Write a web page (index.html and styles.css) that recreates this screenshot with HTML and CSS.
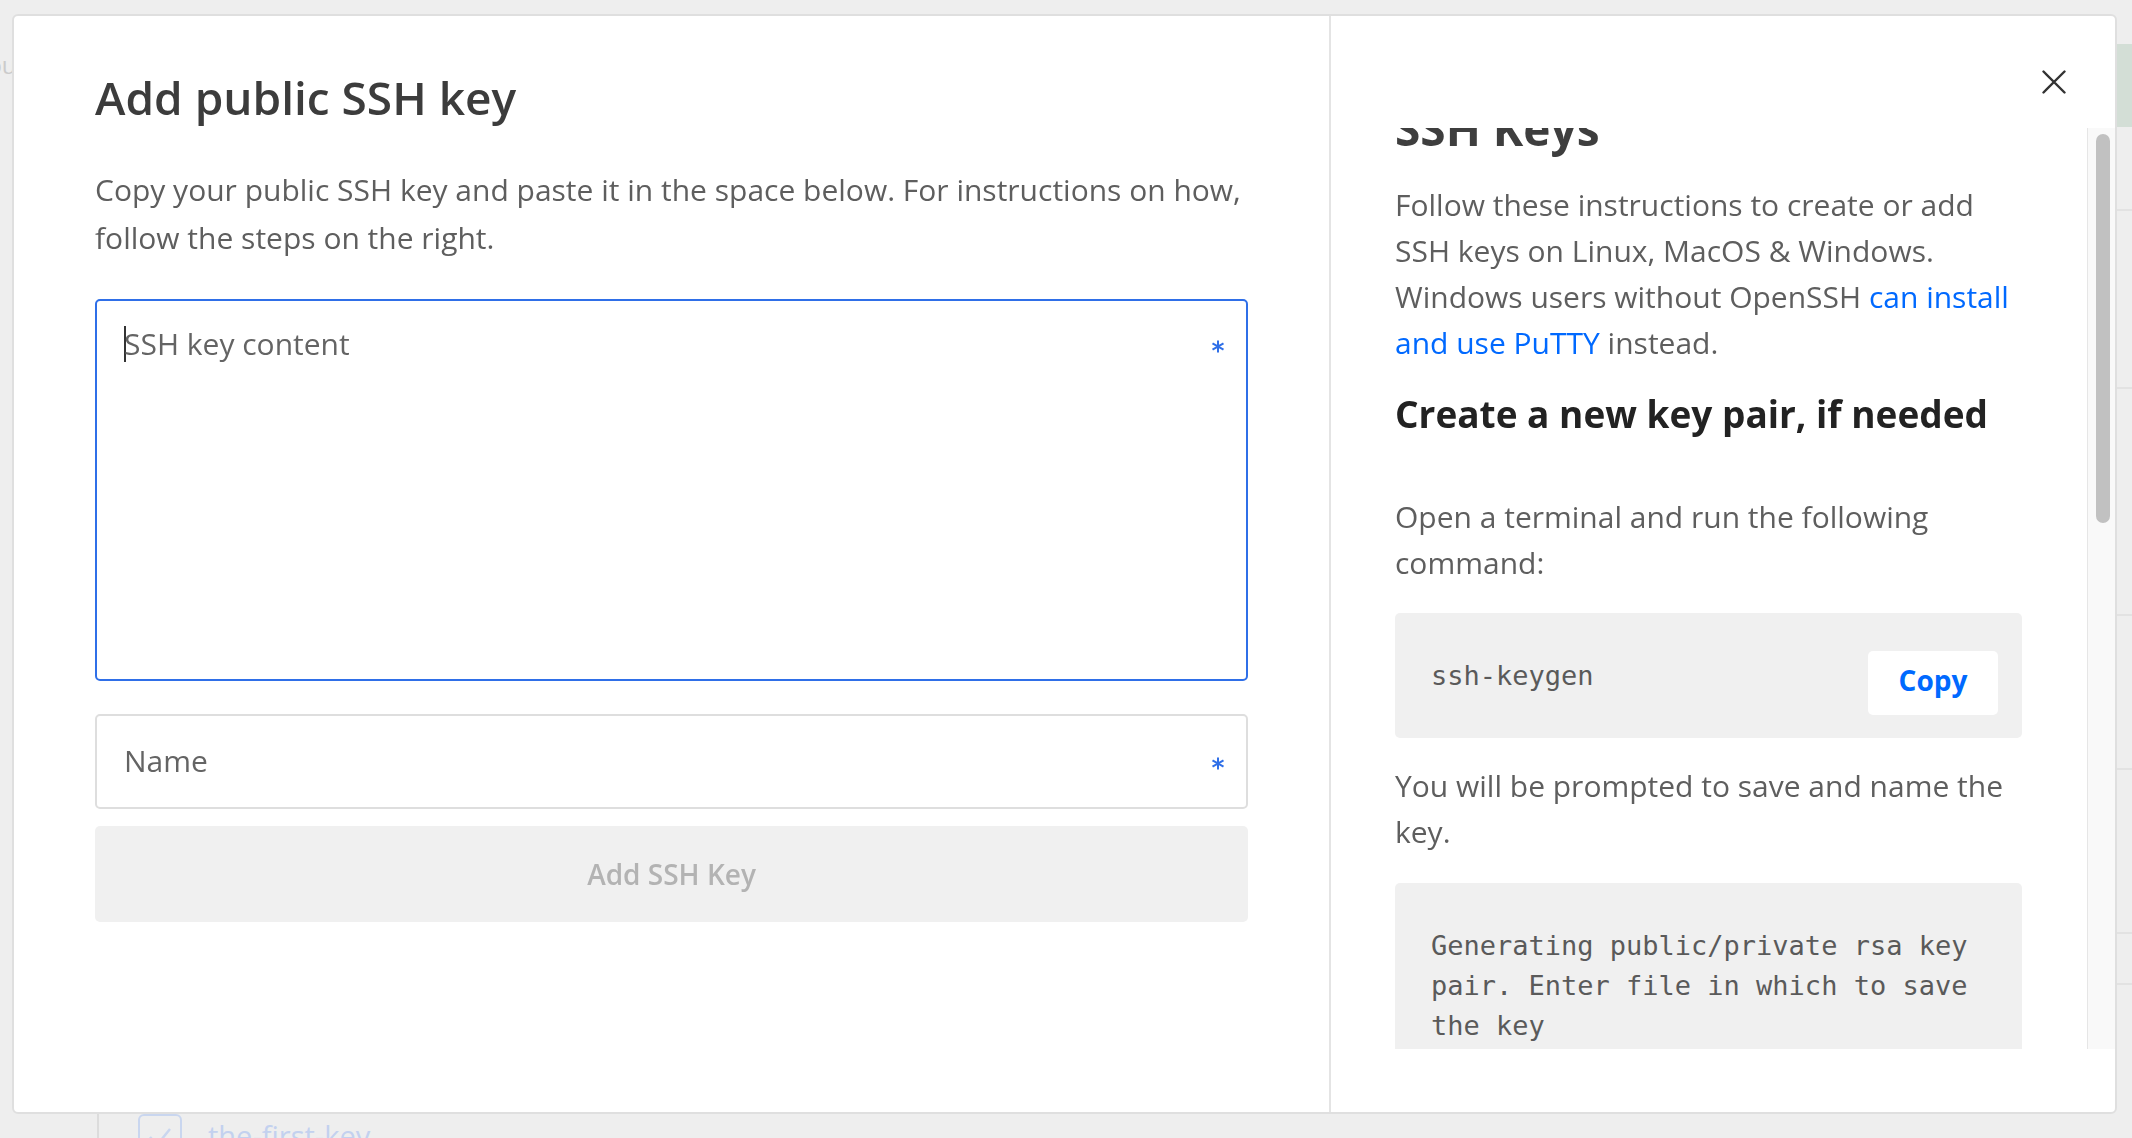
FILE: index.html
```html
<!DOCTYPE html>
<html lang="en">
<head>
<meta charset="utf-8">
<title>Add public SSH key</title>
<link rel="stylesheet" href="styles.css">
</head>
<body>
<div class="backdrop">
  <div class="bg-left"><span class="bg-ghost">You</span></div>
  <div class="bg-main">
    <div class="bg-list">
      <div class="bg-row">
        <span class="bg-check"><svg viewBox="0 0 44 44" width="44" height="44"><path d="M12 23 L19 31 L32 15" fill="none" stroke="#c9d6ef" stroke-width="2.5"/></svg></span>
        <span class="bg-keyname">the-first-key</span>
      </div>
    </div>
  </div>
  <div class="bg-right">
    <div class="bg-green"></div>
    <div class="bg-line h84"></div>
    <div class="bg-line h178"></div>
    <div class="bg-line h227"></div>
    <div class="bg-line h154"></div>
    <div class="bg-line h164"></div>
    <div class="bg-line h51"></div>
  </div>
</div>

<div class="modal" role="dialog" aria-label="Add public SSH key">
  <section class="pane-left">
    <h1 class="title">Add public SSH key</h1>
    <p class="lead">Copy your public SSH key and paste it in the space below. For instructions on how, follow the steps on the right.</p>
    <div class="field field-area">
      <span class="caret"></span><span class="ph">SSH key content</span>
      <svg class="req req-area" viewBox="0 0 14 13" width="14" height="13" aria-label="required"><path d="M7 0.5 V12.5 M1.5 3.3 L12.5 9.7 M1.5 9.7 L12.5 3.3" stroke="#2f6fe8" stroke-width="2" fill="none"/></svg>
    </div>
    <div class="field field-input">
      <span class="ph">Name</span>
      <svg class="req req-input" viewBox="0 0 14 13" width="14" height="13" aria-label="required"><path d="M7 0.5 V12.5 M1.5 3.3 L12.5 9.7 M1.5 9.7 L12.5 3.3" stroke="#2f6fe8" stroke-width="2" fill="none"/></svg>
    </div>
    <div class="btn-add">Add SSH Key</div>
  </section>

  <section class="pane-right">
    <button class="close" aria-label="Close"><svg viewBox="0 0 24 24" width="24" height="24"><path d="M1.5 1.5 L22.5 22.5 M22.5 1.5 L1.5 22.5" stroke="#333" stroke-width="2.4" stroke-linecap="round" fill="none"/></svg></button>
    <div class="scroll">
      <div class="scroll-content">
        <h2 class="doc-h1">SSH Keys</h2>
        <p class="doc-p">Follow these instructions to create or add SSH keys on Linux, MacOS &amp; Windows. Windows users without OpenSSH <a class="link" href="#">can install and use PuTTY</a> instead.</p>
        <h3 class="doc-h2">Create a new key pair, if needed</h3>
        <p class="doc-p p-open">Open a terminal and run the following command:</p>
        <div class="code code-1">
          <pre class="code-text">ssh-keygen</pre>
          <span class="copy">Copy</span>
        </div>
        <p class="doc-p p-prompt">You will be prompted to save and name the key.</p>
        <div class="code code-2">
          <pre class="code-text">Generating public/private rsa key pair. Enter file in which to save the key</pre>
        </div>
      </div>
      <div class="track"><div class="thumb"></div></div>
    </div>
  </section>
</div>
</body>
</html>
```

FILE: styles.css
```css
* { box-sizing: border-box; }

html, body {
  margin: 0;
  padding: 0;
  width: 2132px;
  height: 1138px;
  overflow: hidden;
  background: #eeeeee;
  font-family: "Open Sans", "Lato", "Liberation Sans", sans-serif;
}

/* ---------- page behind the modal ---------- */
.backdrop {
  display: grid;
  grid-template-columns: 97px 1fr 15px;
  height: 1138px;
}

.bg-left {
  padding-top: 48px;
  overflow: hidden;
}

.bg-ghost {
  display: block;
  margin-left: -26px;
  font-size: 24px;
  color: #cbcbcb;
}

.bg-main {
  padding-top: 1000px;
  overflow: hidden;
}

.bg-list {
  border-left: 2px solid #dcdcdc;
  padding-top: 114px;
  padding-left: 39px;
  height: 300px;
}

.bg-row {
  display: flex;
  align-items: flex-start;
  gap: 26px;
}

.bg-check {
  display: block;
  width: 44px;
  height: 44px;
  border: 2px solid #c9d6ef;
  border-radius: 6px;
  flex: none;
}

.bg-check svg { display: block; margin: -2px; }

.bg-keyname {
  font-size: 29px;
  line-height: 44px;
  color: #c3d1ef;
}

.bg-right {
  padding-top: 44px;
  display: flex;
  flex-direction: column;
}

.bg-green {
  height: 83px;
  background: #d3ded6;
  flex: none;
}

.bg-line { border-bottom: 2px solid #e2e2e2; flex: none; }
.h84 { height: 84px; }
.h178 { height: 178px; }
.h227 { height: 227px; }
.h154 { height: 154px; }
.h164 { height: 164px; }
.h51 { height: 51px; }

/* ---------- modal ---------- */
.modal {
  position: fixed;
  left: 12px;
  top: 14px;
  width: 2105px;
  height: 1100px;
  background: #ffffff;
  border: 2px solid #dfdfdf;
  border-radius: 6px;
  display: flex;
  overflow: hidden;
}

.pane-left {
  width: 1317px;
  flex: none;
  border-right: 2px solid #e4e4e4;
  padding: 54.7px 81px 0 81px;
  display: flex;
  flex-direction: column;
}

.title {
  margin: 0;
  font-size: 46px;
  line-height: 53px;
  font-weight: 600;
  color: #3c3c3c;
}

.lead {
  margin: 42.7px -30px 0 0;
  font-size: 30px;
  line-height: 48px;
  color: #5e5e5e;
}

.field {
  position: relative;
  border-radius: 5px;
  flex: none;
  font-size: 30px;
  line-height: 36px;
  color: #646464;
}

.field-area {
  margin-top: 36.6px;
  height: 382px;
  border: 2px solid #2f6fe8;
  padding: 25.4px 27px;
  display: flex;
  align-items: flex-start;
}

.caret {
  display: block;
  width: 2px;
  height: 36px;
  background: #333;
  margin-right: -2px;
  flex: none;
}

.field-input {
  margin-top: 33px;
  height: 95px;
  border: 2px solid #dedede;
  padding: 0 27px;
  display: flex;
  align-items: center;
}

.req {
  position: absolute;
  right: 21px;
  display: block;
}

.req-area { top: 39px; }
.req-input { top: 41px; }

.btn-add {
  margin-top: 17px;
  height: 96px;
  border-radius: 5px;
  background: #f0f0f0;
  color: #b3b3b3;
  font-size: 28px;
  font-weight: 600;
  line-height: 96px;
  text-align: center;
  flex: none;
}

/* ---------- right pane ---------- */
.pane-right {
  position: relative;
  flex: 1;
  padding: 112px 0 63px 0;
  display: flex;
  flex-direction: column;
}

.close {
  position: absolute;
  top: 54px;
  right: 49px;
  width: 24px;
  height: 24px;
  padding: 0;
  border: 0;
  background: transparent;
}

.close svg { display: block; }

.scroll {
  flex: 1;
  display: flex;
  min-height: 0;
}

.scroll-content {
  flex: 1;
  overflow: hidden;
  padding: 0 65px 0 64px;
}

.doc-h1 {
  margin: -28.8px 0 0;
  font-size: 46px;
  line-height: 58px;
  font-weight: 700;
  color: #3e3e3e;
}

.doc-p {
  margin: 25.2px 0 0;
  font-size: 30px;
  line-height: 46px;
  color: #5e5e5e;
}

.link {
  color: #0069ff;
  text-decoration: none;
}

.doc-h2 {
  margin: 25.2px 0 0;
  font-size: 37px;
  line-height: 44px;
  font-weight: 700;
  color: #222222;
}

.p-open { margin-top: 58px; }
.p-prompt { margin-top: 24.4px; }

.code {
  position: relative;
  background: #f0f0f0;
  border-radius: 5px;
  padding: 43px 36px;
}

.code-1 { margin-top: 27.6px; height: 125px; }
.code-2 { margin-top: 28.6px; }

.code-text {
  margin: 0;
  font-family: "DejaVu Sans Mono", "Liberation Mono", monospace;
  font-size: 27px;
  line-height: 40px;
  color: #5a5a5a;
  white-space: pre-wrap;
}

.copy {
  position: absolute;
  top: 38px;
  right: 24px;
  width: 130px;
  height: 64px;
  background: #ffffff;
  border-radius: 5px;
  color: #0069ff;
  font-size: 28px;
  font-weight: 700;
  line-height: 58px;
  text-align: center;
}

.track {
  width: 28px;
  flex: none;
  background: #f9f9f9;
  border-left: 1px solid #e6e6e6;
  padding: 6px 5px 0 8px;
}

.thumb {
  width: 14px;
  height: 389px;
  border-radius: 7px;
  background: #c1c1c1;
}
```
